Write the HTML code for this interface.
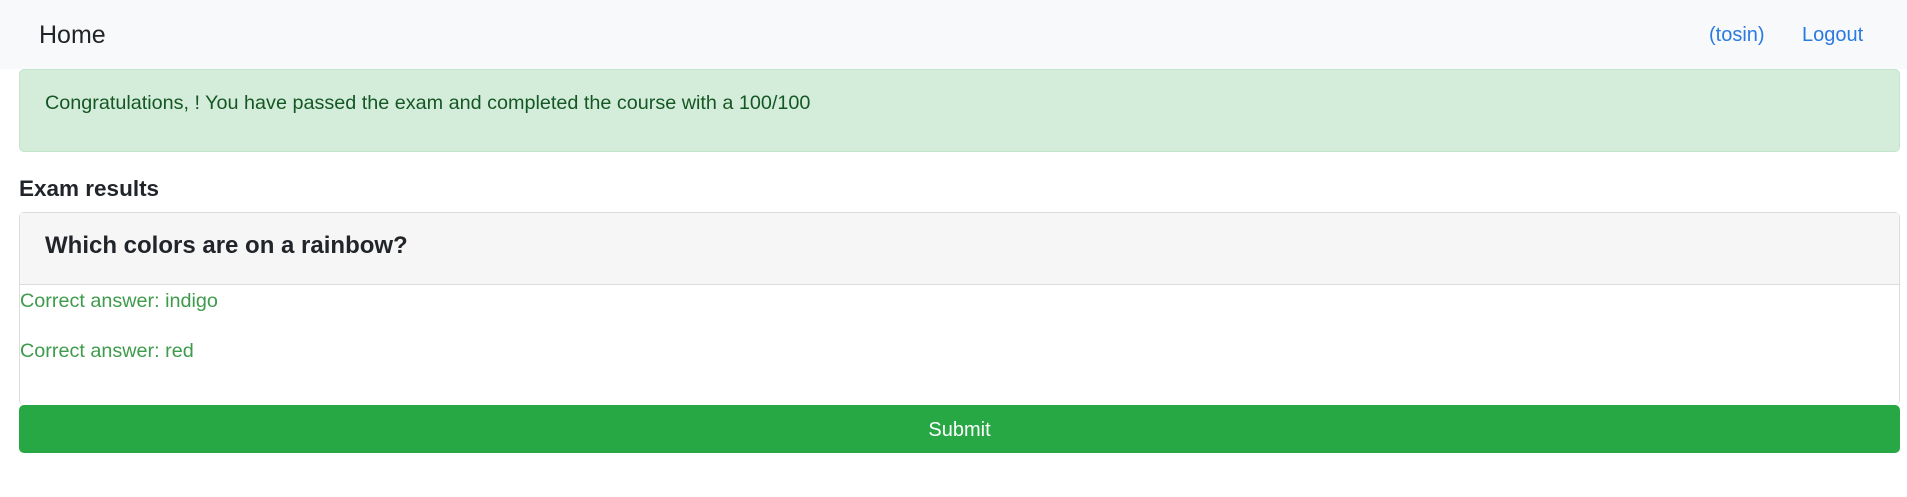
<!DOCTYPE html>
<html><head><style>
*{box-sizing:border-box;margin:0;padding:0}
body{width:1907px;height:497px;background:#fff;font-family:"Liberation Sans",sans-serif;color:#212529;position:relative;overflow:hidden}
.nav{position:absolute;left:0;top:0;width:1907px;height:69px;background:#f8f9fa}
.home{position:absolute;left:39px;top:21px;font-size:25px;color:#212529}
.lnk{position:absolute;top:24px;font-size:20px;color:#2a7ae2}
.alert{position:absolute;left:19px;top:69px;width:1881px;height:83px;background:#d4edda;border:1px solid #c3e6cb;border-radius:5px;color:#155724;font-size:19.8px;padding:22px 25px}
.h{position:absolute;left:19px;top:176px;font-size:22.5px;font-weight:bold;color:#212529}
.card{position:absolute;left:19px;top:212px;width:1881px;height:193px;border:1px solid #dcdcdc;border-radius:5px;border-bottom:none}
.ch{height:72px;background:#f6f6f6;border-bottom:1px solid #dcdcdc;padding:19px 25px;font-size:24px;font-weight:bold;color:#212529}
.ans{position:absolute;left:0;font-size:19.8px;color:#3e9b4b}
.btn{position:absolute;left:19px;top:405px;width:1881px;height:48px;background:#28a745;border-radius:5px;color:#fff;font-size:20px;text-align:center;line-height:50px}
</style></head><body>
<div class="nav"><div class="home">Home</div>
<div class="lnk" style="left:1709px">(tosin)</div>
<div class="lnk" style="left:1802px">Logout</div></div>
<div class="alert">Congratulations, ! You have passed the exam and completed the course with a 100/100</div>
<div class="h">Exam results</div>
<div class="card"><div class="ch">Which colors are on a rainbow?</div>
<div class="ans" style="top:77px">Correct answer: indigo</div>
<div class="ans" style="top:127px">Correct answer: red</div></div>
<div class="btn">Submit</div>
</body></html>
